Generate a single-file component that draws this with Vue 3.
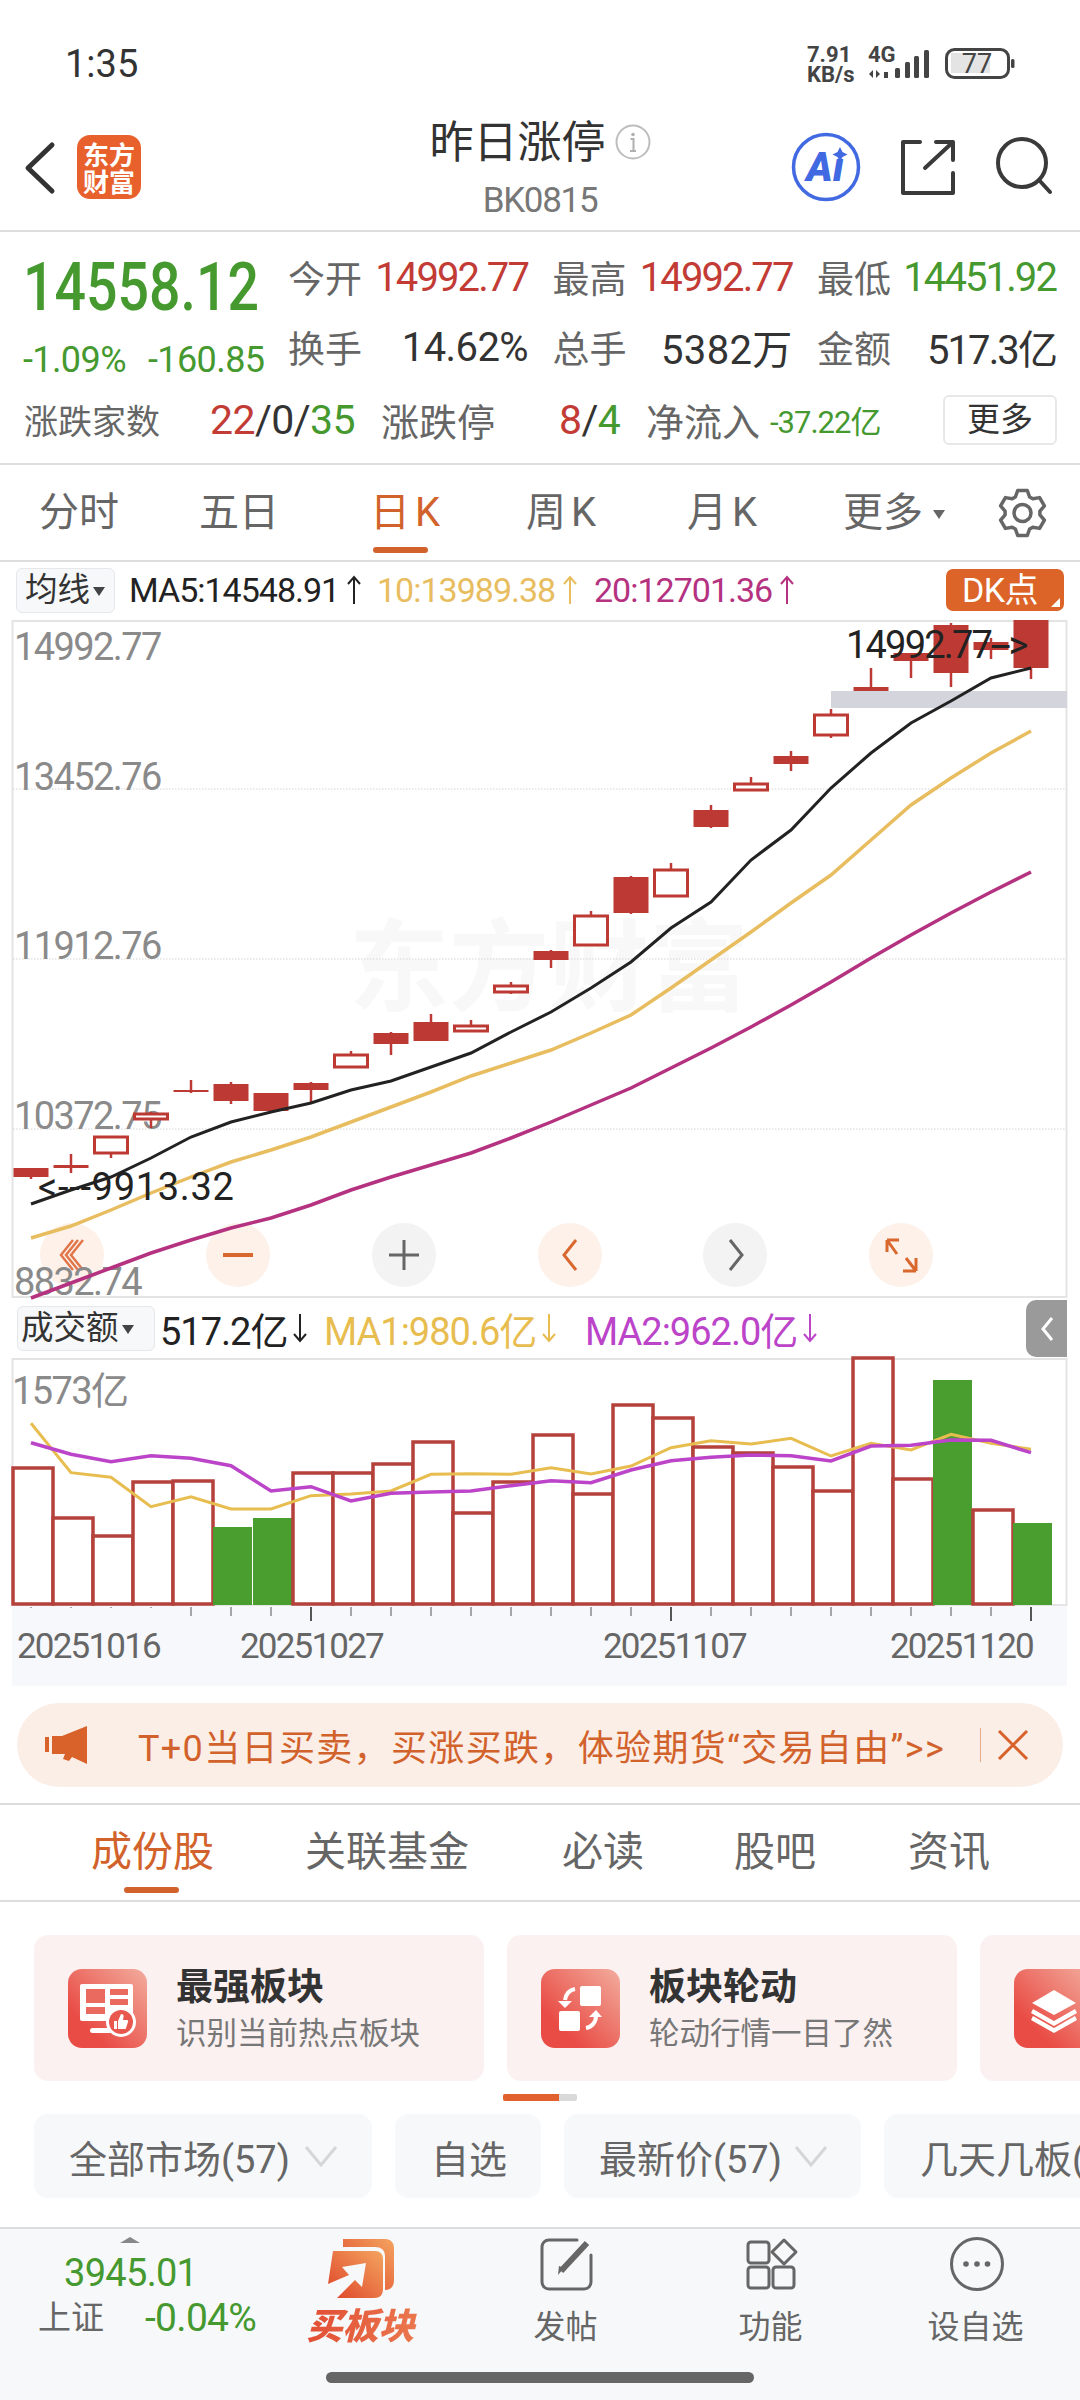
<script setup>
const X = (i) => 31 + 40 * i
const candles = [
  [1168,1177,1168,1179,1],[1165,1168,1154,1173,1],[1137,1153,1137,1158,0],[1114,1119,1112,1128,0],
  [1090,1092,1080,1093,1],[1084,1101,1082,1104,1],[1093,1111,1093,1112,1],[1083,1090,1082,1103,1],
  [1055,1067,1051,1067,0],[1033,1044,1032,1055,1],[1022,1041,1014,1041,1],[1026,1031,1020,1032,0],
  [986,992,982,994,0],[951,960,950,968,1],[916,945,911,945,0],[877,913,876,914,1],[870,896,863,896,0],
  [810,827,805,828,1],[784,790,777,790,0],[756,764,751,771,1],[715,735,709,738,0],[687,691,668,691,1],
  [653,661,653,678,1],[625,673,623,687,1],[642,650,638,659,1],[620,668,620,679,1],
]
const poly = (ys) => ys.map((y, i) => `${X(i)},${y}`).join(' ')
const ma5 = poly([1204,1190,1177,1158,1137,1122,1112,1103,1090,1081,1067,1053,1032,1012,988,962,928,902,860,830,788,753,723,701,678,668])
const ma10 = poly([1238,1226,1210,1193,1177,1162,1150,1137,1122,1107,1092,1076,1063,1050,1033,1015,988,960,932,903,875,840,805,778,753,731])
const ma20 = poly([1298,1283,1268,1253,1240,1228,1218,1205,1190,1177,1165,1153,1138,1122,1105,1088,1068,1048,1027,1005,982,958,935,913,892,872])
const gridYs = [789, 959, 1129]
const priceLabels = [['14992.77',660],['13452.76',790],['11912.76',959],['10372.75',1129],['8832.74',1295]]
const circleBtns = [[72,1],[238,1],[404,0],[570,1],[735,0],[901,1]]

const volTops = [1468,1518,1536,1482,1481,1527,1518,1473,1473,1464,1442,1513,1482,1435,1494,1405,1418,1447,1453,1467,1491,1358,1479,1380,1510,1523]
const greenBars = new Set([5,6,23,25])
const volY = (arr) => arr.map((v, i) => `${X(i)},${(1320 + v / 3).toFixed(1)}`).join(' ')
const vma1 = volY([310,458,472,560,530,567,567,527,522,513,463,461,463,443,462,438,383,362,372,355,408,370,390,343,370,388])
const vma2 = volY([368,403,425,407,415,437,513,500,543,520,516,513,497,482,488,450,422,412,405,407,423,378,376,360,361,398])
const ticks = Array.from({ length: 26 }, (_, i) => i)
const longTick = new Set([7, 16, 25])

const gear = (() => {
  const cx = 1023.5, cy = 512, R = 23, r = 17.5, pts = []
  for (let k = 0; k < 6; k++) {
    const a = -90 + 60 * k
    for (const [rad, d] of [[r, -24], [R, -12], [R, 12], [r, 24]]) {
      const t = ((a + d) * Math.PI) / 180
      pts.push(`${(cx + rad * Math.cos(t)).toFixed(1)},${(cy + rad * Math.sin(t)).toFixed(1)}`)
    }
  }
  return pts.join(' ')
})()

const tabs = ['分时', '五日', '日K', '周K', '月K']
const subTabs = ['成份股', '关联基金', '必读', '股吧', '资讯']
</script>

<template>
  <div class="root">
    <div class="status">
      <span class="time">1:35</span>
      <svg class="status-icons" width="220" height="52" viewBox="800 40 220 52">
        <text x="807" y="62" class="st-b">7.91</text>
        <text x="807" y="82" class="st-b">KB/s</text>
        <text x="868" y="62" class="st-b">4G</text>
        <path d="M873 70v8l-4-4zM876 70v8l4-4" fill="#444" />
        <rect x="884" y="72" width="4" height="6" fill="#444" />
        <rect x="895" y="68" width="5" height="10" rx="1.5" fill="#444" />
        <rect x="905" y="62" width="5" height="16" rx="1.5" fill="#444" />
        <rect x="914" y="56" width="5" height="22" rx="1.5" fill="#444" />
        <rect x="924" y="50" width="5" height="28" rx="1.5" fill="#444" />
        <rect x="946.5" y="49.5" width="62" height="28" rx="8" fill="#fff" stroke="#444" stroke-width="3" />
        <rect x="951" y="53" width="39" height="20" fill="#e4e4e4" />
        <text x="977" y="73" class="st-n" text-anchor="middle">77</text>
        <rect x="1011" y="59" width="3.5" height="9" rx="1.5" fill="#444" />
      </svg>
    </div>

    <header class="head">
      <svg width="160" height="112" viewBox="0 118 160 112">
        <path d="M52 145 L28 168 L52 191" fill="none" stroke="#333" stroke-width="5" stroke-linecap="round" stroke-linejoin="round" />
        <rect x="77" y="135" width="64" height="64" rx="13" fill="#e8602c" />
        <text x="109" y="165" class="logo-t" text-anchor="middle">东方</text>
        <text x="109" y="192" class="logo-t" text-anchor="middle">财富</text>
      </svg>
      <div class="head-mid">
        <div class="title">昨日涨停<svg class="info" width="36" height="36" viewBox="0 0 36 36"><circle cx="18" cy="18" r="16.5" fill="none" stroke="#bdbdbd" stroke-width="2" /><circle cx="18" cy="10.5" r="1.8" fill="#b0b0b0" /><path d="M15.5 15h3v12M15 27h6" fill="none" stroke="#b0b0b0" stroke-width="2" /></svg></div>
        <div class="code">BK0815</div>
      </div>
      <svg class="head-right" width="300" height="112" viewBox="780 118 300 112">
        <circle cx="826" cy="167" r="32.5" fill="#fff" stroke="#4169e1" stroke-width="3.5" />
        <text x="825" y="181" class="ai" text-anchor="middle">Aı</text>
        <path d="M840 147l2.5 5 5 2.5-5 2.5-2.5 5-2.5-5-5-2.5 5-2.5z" fill="#4169e1" />
        <path d="M920 142H903v51h50v-20" fill="none" stroke="#3a3a3a" stroke-width="4" stroke-linejoin="round" stroke-linecap="round" />
        <path d="M925 168L953 142M936 142h17v18" fill="none" stroke="#3a3a3a" stroke-width="4" stroke-linejoin="round" stroke-linecap="round" />
        <circle cx="1022" cy="163" r="24" fill="none" stroke="#3a3a3a" stroke-width="4" />
        <path d="M1039 180l11 12" stroke="#3a3a3a" stroke-width="4" stroke-linecap="round" />
      </svg>
    </header>

    <section class="quote">
      <div class="quote-top">
        <div class="q-left">
          <div class="big">14558.12</div>
          <div class="chg"><span>-1.09%</span><span>-160.85</span></div>
        </div>
        <div class="q-grid">
          <div class="stat"><span class="lb">今开</span><span class="v red">14992.77</span></div>
          <div class="stat"><span class="lb">最高</span><span class="v red">14992.77</span></div>
          <div class="stat"><span class="lb">最低</span><span class="v green">14451.92</span></div>
          <div class="stat"><span class="lb">换手</span><span class="v pct">14.62%</span></div>
          <div class="stat"><span class="lb">总手</span><span class="v wan">5382万</span></div>
          <div class="stat"><span class="lb">金额</span><span class="v">517.3亿</span></div>
        </div>
      </div>
      <div class="q-row3">
        <span class="lb s34">涨跌家数</span>
        <span class="v"><i class="red">22</i>/0/<i class="green">35</i></span>
        <span class="lb">涨跌停</span>
        <span class="v"><i class="red">8</i>/<i class="green">4</i></span>
        <span class="lb">净流入</span>
        <span class="flow green">-37.22亿</span>
        <span class="more">更多</span>
      </div>
    </section>

    <nav class="tabs">
      <span v-for="(t, i) in tabs" :key="t" class="tab" :class="{ on: i === 2, kt: i >= 2 }">{{ t }}</span>
      <span class="tab">更多<i class="caret"></i></span>
      <svg width="60" height="60" viewBox="994 482 60 60">
        <polygon :points="gear" fill="none" stroke="#666" stroke-width="3.5" stroke-linejoin="round" />
        <circle cx="1023.5" cy="512" r="8.5" fill="none" stroke="#666" stroke-width="3.5" />
      </svg>
    </nav>

    <div class="ma-row">
      <span class="pick">均线<i class="caret dark"></i></span>
      <span class="ma k">MA5:14548.91<svg class="arr" width="16" height="30" viewBox="0 0 16 30"><path d="M8 29V2M2 9l6-7 6 7" fill="none" stroke="currentColor" stroke-width="2" /></svg></span>
      <span class="ma y">10:13989.38<svg class="arr" width="16" height="30" viewBox="0 0 16 30"><path d="M8 29V2M2 9l6-7 6 7" fill="none" stroke="currentColor" stroke-width="2" /></svg></span>
      <span class="ma p">20:12701.36<svg class="arr" width="16" height="30" viewBox="0 0 16 30"><path d="M8 29V2M2 9l6-7 6 7" fill="none" stroke="currentColor" stroke-width="2" /></svg></span>
      <span class="dk">DK点<i class="corner"></i></span>
    </div>

    <svg class="chart" width="1080" height="678" viewBox="0 620 1080 678">
      <rect x="12.5" y="621" width="1054" height="676" fill="#fff" stroke="#e4e4e4" stroke-width="2" />
      <text x="349" y="1003" class="wm">东方财富</text>
      <line v-for="y in gridYs" :key="y" x1="13" x2="1066" :y1="y" :y2="y" stroke="#d4d4d4" stroke-width="1" stroke-dasharray="1.5 1.5" />
      <g v-for="(c, i) in circleBtns" :key="i">
        <circle :cx="c[0]" cy="1255" r="32" :fill="c[1] ? '#fdf1ea' : '#f3f3f3'" />
      </g>
      <path d="M83 1240l-12 15 12 15M73 1240l-12 15 12 15M78 1240l-12 15 12 15" fill="none" stroke="#e0764a" stroke-width="2.5" />
      <path d="M223 1255h30" stroke="#d9682f" stroke-width="4" />
      <path d="M389 1255h30M404 1240v30" stroke="#666" stroke-width="3" />
      <path d="M576 1240l-12 15 12 15" fill="none" stroke="#d9682f" stroke-width="3" />
      <path d="M730 1240l12 15-12 15" fill="none" stroke="#666" stroke-width="3" />
      <path d="M887 1240v12M887 1240h12M887 1240l10 14M916 1271v-13M916 1271h-13M916 1271l-10-13" fill="none" stroke="#d9682f" stroke-width="3" />
      <rect x="831" y="691" width="236" height="17" fill="#d4d5dc" />
      <text v-for="l in priceLabels" :key="l[0]" x="14" :y="l[1]" class="axis">{{ l[0] }}</text>
      <g v-for="(c, i) in candles" :key="i">
        <line :x1="X(i)" :x2="X(i)" :y1="c[2]" :y2="c[3]" stroke="#bd3a34" stroke-width="2.5" />
        <rect v-if="c[4]" :x="X(i) - 17.5" :y="c[0]" width="35" :height="c[1] - c[0]" fill="#bd3a34" />
        <rect v-else :x="X(i) - 16.5" :y="c[0]" width="33" :height="c[1] - c[0]" fill="#fff" stroke="#bd3a34" stroke-width="3" />
      </g>
      <polyline :points="ma20" fill="none" stroke="#b4327f" stroke-width="3.5" />
      <polyline :points="ma10" fill="none" stroke="#e8bd60" stroke-width="3.5" />
      <polyline :points="ma5" fill="none" stroke="#222" stroke-width="3" />
      <text x="846" y="658" class="note">14992.77--&gt;</text>
      <text x="38" y="1200" class="note2">&lt;---9913.32</text>
    </svg>

    <div class="vol-row">
      <span class="pick wide">成交额<i class="caret dark"></i></span>
      <span class="ma k">517.2亿<svg class="arr" width="16" height="30" viewBox="0 0 16 30"><path d="M8 1v27M2 21l6 7 6-7" fill="none" stroke="currentColor" stroke-width="2" /></svg></span>
      <span class="ma y2">MA1:980.6亿<svg class="arr" width="16" height="30" viewBox="0 0 16 30"><path d="M8 1v27M2 21l6 7 6-7" fill="none" stroke="currentColor" stroke-width="2" /></svg></span>
      <span class="ma p2">MA2:962.0亿<svg class="arr" width="16" height="30" viewBox="0 0 16 30"><path d="M8 1v27M2 21l6 7 6-7" fill="none" stroke="currentColor" stroke-width="2" /></svg></span>
      <span class="handle"><svg width="16" height="26" viewBox="0 0 16 26"><path d="M13 2L4 13l9 11" fill="none" stroke="#fff" stroke-width="3" /></svg></span>
    </div>

    <svg class="chart" width="1080" height="248" viewBox="0 1358 1080 248">
      <rect x="12.5" y="1359" width="1054" height="246" fill="#fff" stroke="#e4e4e4" stroke-width="2" />
      <text x="12" y="1404" class="axis">1573亿</text>
      <g v-for="(t, i) in volTops" :key="i">
        <rect v-if="greenBars.has(i)" :x="12 + 40 * i + 1" :y="t" width="39" :height="1605 - t" fill="#4a9e2f" />
        <rect v-else :x="13 + 40 * i" :y="t" width="40" :height="1604 - t" fill="#fff" stroke="#b5413c" stroke-width="3.5" />
      </g>
      <polyline :points="vma1" fill="none" stroke="#e8bd50" stroke-width="3" />
      <polyline :points="vma2" fill="none" stroke="#bb44c9" stroke-width="3.5" />
    </svg>

    <svg class="chart" width="1080" height="80" viewBox="0 1606 1080 80">
      <rect x="12" y="1606" width="1055" height="80" fill="#f7f8fb" />
      <line v-for="i in ticks" :key="i" :x1="X(i)" :x2="X(i)" y1="1607" :y2="longTick.has(i) ? 1621 : (i < 4 ? 1608 : 1616)" stroke="#555" :stroke-width="longTick.has(i) ? 2 : 1" />
      <text x="17" y="1658" class="date">20251016</text>
      <text x="240" y="1658" class="date">20251027</text>
      <text x="603" y="1658" class="date">20251107</text>
      <text x="890" y="1658" class="date">20251120</text>
    </svg>

    <div class="banner">
      <svg width="42" height="38" viewBox="0 0 42 38"><path d="M0 11h4v15H0zM7 10h10L42 0v38L27 31l-3 4-6-2 2-5H7z" fill="#d9622b" /></svg>
      <span class="b-text">T+0当日买卖，买涨买跌，体验期货“交易自由”&gt;&gt;</span>
      <i class="b-div"></i>
      <svg width="32" height="30" viewBox="0 0 32 30"><path d="M2 1l28 28M30 1L2 29" stroke="#d9622b" stroke-width="3" /></svg>
    </div>

    <nav class="subtabs">
      <span v-for="(t, i) in subTabs" :key="t" class="sub" :class="{ on: i === 0 }">{{ t }}</span>
    </nav>

    <div class="cards">
      <div class="card">
        <svg class="c-ic" width="79" height="79" viewBox="68 1968 79 79">
          <defs>
            <linearGradient id="cg1" x1="1" y1="0" x2="0" y2="1"><stop offset="0" stop-color="#f2ad9e" /><stop offset="0.75" stop-color="#e94c45" /></linearGradient>
          </defs>
          <rect x="68" y="1968" width="79" height="79" rx="14" fill="url(#cg1)" />
          <rect x="80" y="1983" width="53" height="37" rx="2" fill="#fff" />
          <rect x="86" y="1988" width="19" height="14" fill="#ea6a5f" />
          <rect x="86" y="2006" width="19" height="7" fill="#ea6a5f" />
          <rect x="110" y="1988" width="18" height="6" fill="#ea6a5f" />
          <rect x="110" y="1998" width="18" height="6" fill="#ea6a5f" />
          <rect x="90" y="2027" width="22" height="5" rx="2.5" fill="#fff" />
          <circle cx="121" cy="2021" r="15" fill="#fff" />
          <circle cx="121" cy="2021" r="12" fill="#e9584f" />
          <path d="M114 2020h3v8h-3zM118 2020l3-7c2 0 3 1 2.5 3l-.5 3h4c1 0 1.500 1 1 2l-2 6c0 1-1 1-2 1h-6z" fill="#fff" />
        </svg>
        <div class="c-body"><div class="c-t">最强板块</div><div class="c-s">识别当前热点板块</div></div>
      </div>
      <div class="card">
        <svg class="c-ic" width="79" height="79" viewBox="541 1968 79 79">
          <rect x="541" y="1968" width="79" height="79" rx="14" fill="url(#cg1)" />
          <rect x="580" y="1985" width="21" height="20" rx="2" fill="#fff" />
          <rect x="559" y="2010" width="21" height="20" rx="2" fill="#fff" />
          <path d="M575 1988c-6 1-9 5-10 11" fill="none" stroke="#fff" stroke-width="4" />
          <path d="M558 2000h14l-7 7z" fill="#fff" />
          <path d="M586 2027c6-1 10-6 10-12" fill="none" stroke="#fff" stroke-width="4" />
          <path d="M589 2016h13l-6-7z" fill="#fff" />
        </svg>
        <div class="c-body"><div class="c-t">板块轮动</div><div class="c-s">轮动行情一目了然</div></div>
      </div>
      <div class="card">
        <svg class="c-ic" width="79" height="79" viewBox="1014 1968 79 79">
          <rect x="1014" y="1968" width="79" height="79" rx="14" fill="url(#cg1)" />
          <path d="M1054 1989l22 13-22 12-22-12z" fill="#fff" />
          <path d="M1033 2008l21 12 21-12 2 4-23 13-23-13zM1033 2015l21 12 21-12 2 4-23 13-23-13z" fill="#fff" />
        </svg>
      </div>
    </div>

    <div class="prog"><i></i></div>

    <div class="chips">
      <div class="chip w1">全部市场(57)<svg width="34" height="22" viewBox="0 0 34 22"><path d="M2 2l15 18L32 2" fill="none" stroke="#d6d6d6" stroke-width="3" /></svg></div>
      <div class="chip w2">自选</div>
      <div class="chip w3">最新价(57)<svg width="34" height="22" viewBox="0 0 34 22"><path d="M2 2l15 18L32 2" fill="none" stroke="#d6d6d6" stroke-width="3" /></svg></div>
      <div class="chip w4">几天几板(57)</div>
    </div>

    <footer class="bar">
      <div class="bar-grid">
        <div class="tick">
          <i class="tri"></i>
          <div class="tick-p green">3945.01</div>
          <div class="tick-r"><span class="sh">上证</span><span class="green">-0.04%</span></div>
        </div>
        <div class="col">
          <svg width="205" height="75" viewBox="258 2229 205 75">
            <defs>
              <linearGradient id="bg1" x1="0" y1="1" x2="1" y2="0"><stop offset="0" stop-color="#de4428" /><stop offset="1" stop-color="#f4a460" /></linearGradient>
            </defs>
            <path d="M343 2239h42c6 0 9 4 9 9v32c0 6-3 10-9 10V2256c0-6-4-9-10-9h-32z" fill="url(#bg1)" />
            <path d="M333 2251h42c5 0 8 3 8 8v30c0 6-3 9-9 9h-37l18-18 7 7 4-24-24 4 7 8-21 9z" fill="url(#bg1)" />
          </svg>
          <div class="lbl buy">买板块</div>
        </div>
        <div class="col">
          <svg width="205" height="75" viewBox="463 2229 205 75">
            <path d="M577 2240h-28c-4 0-7 3-7 7v35c0 4 3 7 7 7h35c4 0 7-3 7-7v-27" fill="none" stroke="#666" stroke-width="3" stroke-linecap="round" />
            <path d="M587 2243l-26 28" stroke="#666" stroke-width="6" />
            <path d="M564 2268l-6 7 1-9z" fill="#666" />
          </svg>
          <div class="lbl">发帖</div>
        </div>
        <div class="col">
          <svg width="205" height="75" viewBox="668 2229 205 75">
            <g fill="none" stroke="#666" stroke-width="3" stroke-linejoin="round">
              <rect x="748" y="2242" width="21" height="21" rx="3" />
              <path d="M784 2240l12 12-12 12-12-12z" />
              <rect x="748" y="2267" width="21" height="21" rx="3" />
              <rect x="773" y="2267" width="21" height="21" rx="3" />
            </g>
          </svg>
          <div class="lbl">功能</div>
        </div>
        <div class="col">
          <svg width="205" height="75" viewBox="873 2229 205 75">
            <circle cx="977" cy="2264" r="25.500" fill="none" stroke="#666" stroke-width="3" />
            <circle cx="966" cy="2264" r="2.800" fill="#666" />
            <circle cx="977" cy="2264" r="2.800" fill="#666" />
            <circle cx="987.500" cy="2264" r="2.800" fill="#666" />
          </svg>
          <div class="lbl">设自选</div>
        </div>
      </div>
      <div class="home"></div>
    </footer>
  </div>
</template>

<style scoped>
.root { width: 1080px; height: 2400px; overflow: hidden; background: #fff; position: relative; font-family: Roboto, "Noto Sans CJK SC", sans-serif; color: #333; }
i { font-style: normal; }
svg { display: block; flex: none; }
.status { height: 118px; display: flex; align-items: flex-start; }
.time { margin: 42px 0 0 65px; font-size: 38px; line-height: 44px; color: #333; }
.status-icons { margin: 40px 60px 0 auto; }
.st-b { font-size: 22px; font-weight: 700; fill: #444; }
.st-n { font-size: 27px; fill: #444; }

.head { height: 112px; border-bottom: 2px solid #ddd; display: grid; grid-template-columns: 1fr auto 1fr; }
.head-right { justify-self: end; }
.logo-t { font-size: 26px; font-weight: 700; fill: #fff; }
.ai { font-size: 40px; font-weight: 900; font-style: italic; fill: #4169e1; }
.head-mid { display: flex; flex-direction: column; align-items: center; }
.title { display: flex; align-items: center; gap: 9px; height: 50px; font-size: 44px; line-height: 50px; color: #333; }
.info { margin-top: -2px; }
.code { margin-top: 13px; font-size: 35px; line-height: 40px; color: #777; letter-spacing: -1.3px; }

.quote { box-sizing: content-box; height: 221px; border-bottom: 2px solid #ddd; padding-top: 10px; }
.quote-top { display: flex; height: 150px; padding-left: 23px; }
.q-left { width: 265px; flex: none; }
.big { margin-top: 11px; line-height: 70px; font-size: 66px; font-weight: 500; color: #45992f; transform: scaleX(.84); transform-origin: left; white-space: nowrap; }
.chg { display: flex; font-size: 36px; line-height: 74px; color: #45992f; letter-spacing: -.6px; }
.chg span:first-child { width: 125px; }
.q-grid { display: grid; grid-template-columns: 240px 240px 239px; column-gap: 24.500px; grid-auto-rows: 70px; }
.stat { display: flex; justify-content: space-between; align-items: center; }
.lb { font-size: 37px; color: #666; }
.lb.s34 { font-size: 34px; }
.v { font-size: 40px; letter-spacing: -1.9px; color: #333; white-space: nowrap; }
.v.pct { letter-spacing: -.6px; }
.v.wan { letter-spacing: .3px; }
.red { color: #c23b35; }
.green { color: #45992f; }
.q-row3 { display: grid; grid-template-columns: 186px 171px 178px 87px 124px 173px 114px; padding-left: 24px; height: 50px; align-items: center; }
.q-row3 .v { font-size: 41px; letter-spacing: -.6px; }
.q-row3 .lb:not(.s34) { font-size: 38px; }
.flow { font-size: 31px; letter-spacing: -1px; white-space: nowrap; }
.more { height: 50px; box-sizing: border-box; border: 2px solid #e8e8e8; border-radius: 6px; font-size: 33px; line-height: 46px; text-align: center; color: #333; }

.tabs { height: 95px; border-bottom: 2px solid #ddd; display: grid; grid-template-columns: 160px 171px 156px 161px 156px 150px 60px; padding-left: 39px; align-items: center; }
.tab { position: relative; font-size: 40px; line-height: 95px; color: #666; white-space: nowrap; }
.tab.kt { letter-spacing: 5px; }
.tab.on { color: #d2622b; }
.tab.on::after { content: ""; position: absolute; left: 3px; bottom: 7px; width: 55px; height: 6px; border-radius: 3px; background: #d2622b; }
.caret { display: inline-block; margin-left: 10px; vertical-align: 7px; border-left: 6px solid transparent; border-right: 6px solid transparent; border-top: 9px solid #666; }
.caret.dark { border-top-color: #444; margin-left: 3px; vertical-align: 5px; }

.ma-row { height: 56px; padding-bottom: 2px; display: grid; grid-template-columns: 113px 248px 217px 352px 118px; padding-left: 16px; align-items: center; }
.pick { width: 99px; height: 45px; box-sizing: border-box; background: #f7f8fa; border: 1.500px solid #e5e7eb; border-radius: 6px; font-size: 32.5px; line-height: 42px; padding-left: 8px; color: #333; white-space: nowrap; }
.pick.wide { width: 138px; padding-left: 3px; }
.ma { display: flex; align-items: center; gap: 7px; font-size: 34px; letter-spacing: -1px; white-space: nowrap; }
.k { color: #222; }
.y { color: #e8bd60; }
.p { color: #b4327f; }
.y2 { color: #e8bd50; }
.p2 { color: #bb44c9; }
.dk { position: relative; height: 42px; line-height: 42px; background: #dc6428; color: #fff; border-radius: 7px; font-size: 34px; text-align: center; letter-spacing: -.5px; padding-right: 10px; }
.corner { position: absolute; right: 4px; bottom: 4px; border-left: 9px solid transparent; border-bottom: 9px solid #fff; }

.chart { width: 1080px; overflow: visible; }
.wm { font-size: 100px; font-weight: 700; fill: #f8f8f8; }
.axis { font-size: 38px; letter-spacing: -1.6px; fill: #8a8a8a; }
.note { font-size: 38px; letter-spacing: -1.8px; fill: #222; }
.note2 { font-size: 38px; letter-spacing: .7px; fill: #222; }
.date { font-size: 35px; letter-spacing: -1.8px; fill: #666; }

.vol-row { position: relative; height: 60px; box-sizing: border-box; padding: 0 0 0 17px; display: grid; grid-template-columns: 143px 164px 261px 300px; align-items: center; }
.vol-row .ma { font-size: 38px; gap: 5px; }
.handle { position: absolute; right: 13px; top: 2px; width: 41px; height: 57px; background: #9a9a9a; border-radius: 10px 0 0 10px; display: flex; align-items: center; justify-content: center; }

.banner { margin: 17px 17px 0; height: 84px; border-radius: 42px; background: #fbeee7; display: flex; align-items: center; padding-left: 28px; }
.b-text { margin-left: 51px; width: 842px; flex: none; font-size: 36px; letter-spacing: 1.35px; color: #d2622b; white-space: nowrap; }
.b-div { width: 1px; height: 34px; background: #e6a98a; margin-right: 16px; }

.subtabs { margin-top: 16px; border-top: 2px solid #ddd; border-bottom: 2px solid #ddd; height: 95px; display: grid; grid-template-columns: 214px 257px 172px 174px 100px; padding-left: 91px; align-items: center; }
.sub { position: relative; font-size: 41px; line-height: 95px; color: #666; white-space: nowrap; }
.sub.on { color: #d2622b; }
.sub.on::after { content: ""; position: absolute; left: 33px; bottom: 7px; width: 55px; height: 6px; border-radius: 3px; background: #d2622b; }

.cards { margin-top: 33px; padding-left: 34px; display: flex; gap: 23px; overflow: hidden; }
.card { flex: none; width: 450px; height: 146px; box-sizing: border-box; padding-left: 34px; border-radius: 14px; background: #fbf1f1; display: flex; align-items: center; gap: 29px; }
.c-body { padding-top: 3px; }
.c-t { font-size: 37px; line-height: 42px; font-weight: 700; color: #333; white-space: nowrap; }
.c-s { margin-top: 7px; font-size: 30.500px; line-height: 36px; color: #777; white-space: nowrap; }

.prog { margin: 13px 0 0 503px; width: 74px; height: 7px; background: #d9d9d9; border-radius: 2px; overflow: hidden; }
.prog i { display: block; width: 56px; height: 7px; background: #e2622f; }

.chips { margin-top: 13px; padding-left: 34px; display: flex; gap: 23px; overflow: hidden; }
.chip { flex: none; height: 84px; box-sizing: border-box; border-radius: 14px; background: #f7f8fa; display: flex; align-items: center; font-size: 38px; color: #666; white-space: nowrap; }
.w1 { width: 338px; padding-left: 35px; gap: 14px; }
.w2 { width: 146px; padding-left: 36px; }
.w3 { width: 297px; padding-left: 35px; gap: 12px; }
.w4 { width: 300px; padding-left: 36px; }

.bar { margin-top: 29px; height: 173px; box-sizing: border-box; border-top: 2px solid #ddd; background: #f7f8fa; }
.bar-grid { display: grid; grid-template-columns: 258px repeat(4, 205px); height: 143px; }
.tick { position: relative; }
.tri { display: block; width: 0; margin: 8px 0 0 120px; border-left: 10px solid transparent; border-right: 10px solid transparent; border-bottom: 6px solid #888; }
.tick-p { margin-left: 64px; font-size: 38px; line-height: 60px; letter-spacing: -.7px; }
.tick-r { display: flex; margin-left: 38px; line-height: 30px; font-size: 39px; letter-spacing: -.7px; }
.sh { width: 107px; font-size: 33px; color: #666; letter-spacing: 0; }
.lbl { line-height: 46px; font-size: 32px; text-align: center; color: #666; }
.lbl.buy { font-size: 36px; font-weight: 900; font-style: italic; background: linear-gradient(100deg, #de3a28, #ee8a5a); -webkit-background-clip: text; background-clip: text; color: transparent; }
.home { margin-left: 326px; width: 428px; height: 11px; border-radius: 6px; background: #666; }
</style>
